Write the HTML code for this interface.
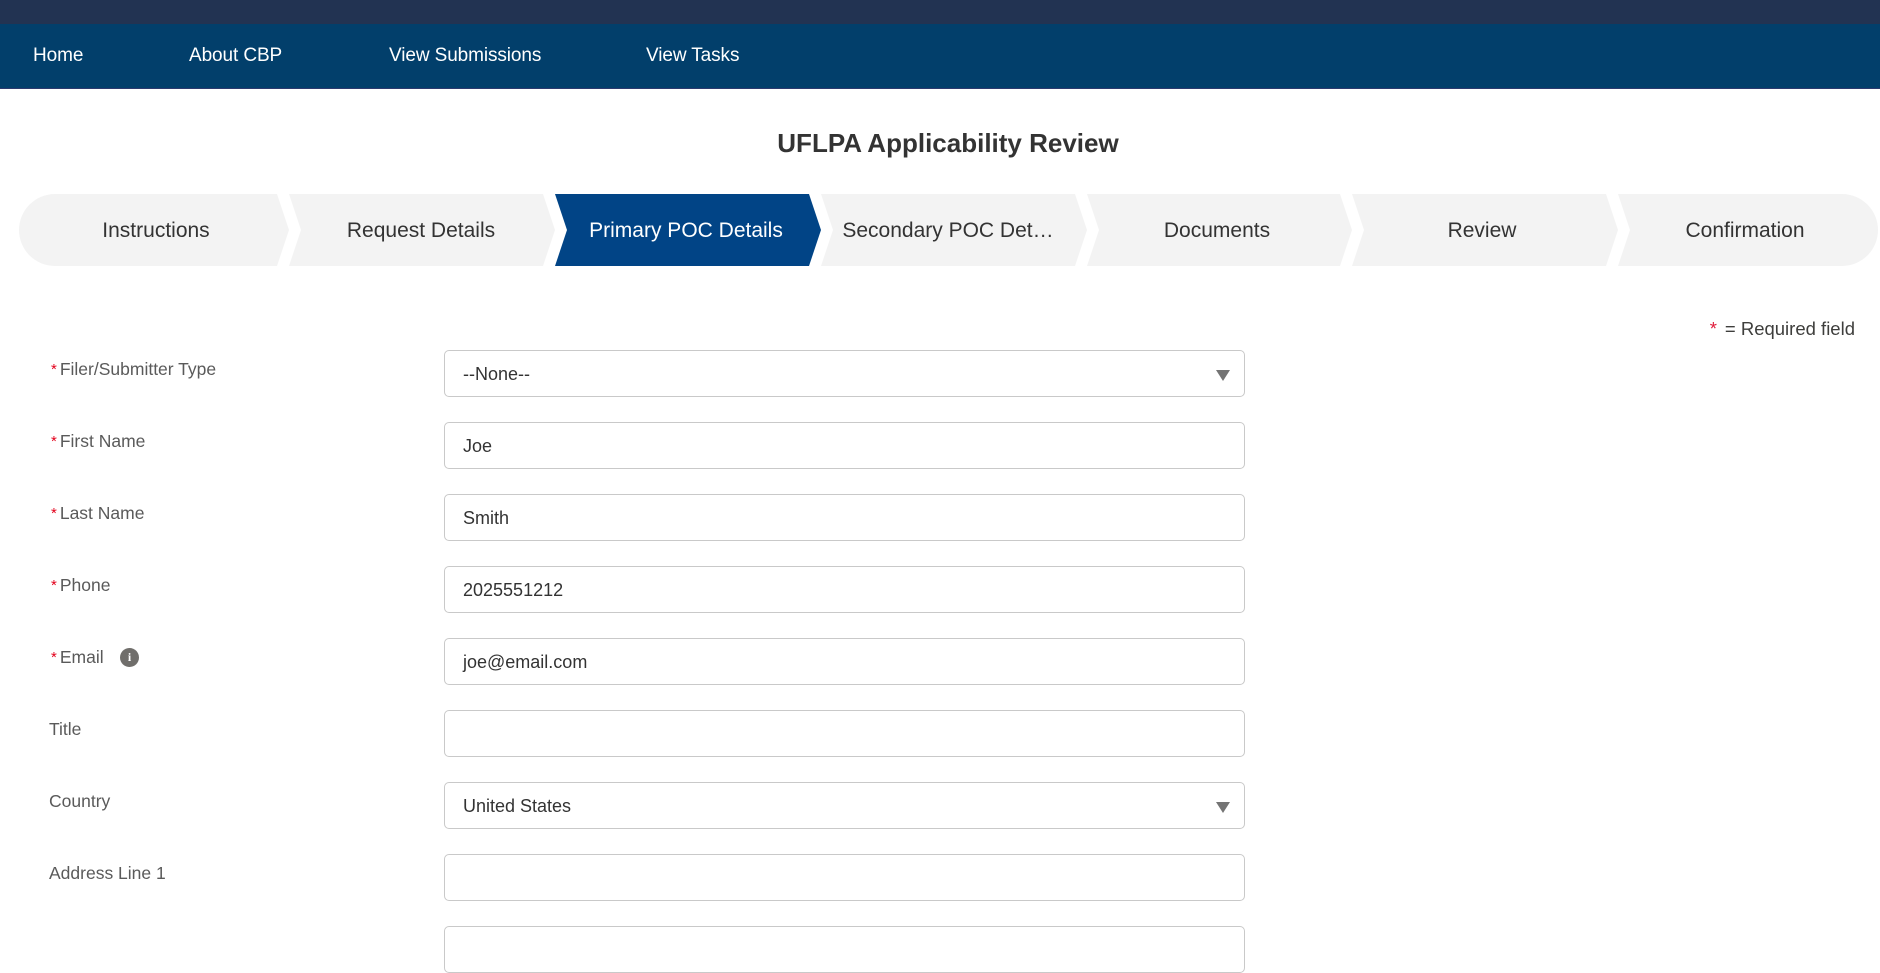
<!DOCTYPE html>
<html><head><meta charset="utf-8">
<style>
*{margin:0;padding:0;box-sizing:border-box}
html,body{width:1880px;height:938px;overflow:hidden;background:#fff;font-family:"Liberation Sans",sans-serif}
.top{position:absolute;left:0;top:0;width:1880px;height:24px;background:#223352}
.nav{position:absolute;left:0;top:24px;width:1880px;height:65px;background:#023f6b;border-bottom:1px solid #2d3a6e}
.nav span{position:absolute;top:21px;color:#fff;font-size:19px;letter-spacing:-0.1px}
.title{position:absolute;left:8px;width:1880px;top:128px;text-align:center;font-size:26px;font-weight:bold;color:#333}
.req{position:absolute;right:25px;top:318px;font-size:18.5px;color:#3e3e3c}
.req b{color:#e01e3c;font-weight:normal;margin-right:8px}
.lbl{position:absolute;left:49px;font-size:17.5px;color:#5a5a5a}
.lbl i{font-style:normal;color:#e3001b;margin-right:5px;font-size:15px;position:relative;left:2px;top:-1px}
.inp{position:absolute;left:444px;width:801px;height:47px;border:1px solid #c9c9c9;border-radius:5px;background:#fff;font-size:18px;color:#333;padding:13px 0 0 18px}
.tri{position:absolute;right:14px;top:19px;width:0;height:0;border-left:7px solid transparent;border-right:7px solid transparent;border-top:11px solid #747474}
.info{position:absolute;left:120px;width:19px;height:19px;border-radius:50%;background:#706e6b;color:#fff;font-size:12px;font-weight:bold;text-align:center;line-height:19px;font-family:"Liberation Serif",serif}
</style></head><body>
<div class="top"></div>
<div class="nav">
<span style="left:33px">Home</span>
<span style="left:189px">About CBP</span>
<span style="left:389px">View Submissions</span>
<span style="left:646px">View Tasks</span>
</div>
<div class="title">UFLPA Applicability Review</div>
<svg style="position:absolute;left:0;top:0" width="1880" height="300">
<g fill="#f3f3f3">
<path d="M55,194 H277 L289,230 L277,266 H55 A36,36 0 0 1 55,194 Z"/>
<path d="M289,194 H543 L555,230 L543,266 H289 L301,230 Z"/>
<path d="M555,194 H809 L821,230 L809,266 H555 L567,230 Z" fill="#014486"/>
<path d="M821,194 H1075 L1087,230 L1075,266 H821 L833,230 Z"/>
<path d="M1087,194 H1340 L1352,230 L1340,266 H1087 L1099,230 Z"/>
<path d="M1352,194 H1606 L1618,230 L1606,266 H1352 L1364,230 Z"/>
<path d="M1618,194 H1842 A36,36 0 0 1 1842,266 H1618 L1630,230 Z"/>
</g>
<g font-family="Liberation Sans, sans-serif" font-size="21" fill="#333" text-anchor="middle">
<text x="156" y="237">Instructions</text>
<text x="421" y="237">Request Details</text>
<text x="686" y="237" fill="#fff">Primary POC Details</text>
<text x="948" y="237">Secondary POC Det…</text>
<text x="1217" y="237">Documents</text>
<text x="1482" y="237">Review</text>
<text x="1745" y="237">Confirmation</text>
</g>
</svg>
<div class="req"><b>*</b>= Required field</div>

<div class="lbl" style="top:359px"><i>*</i>Filer/Submitter Type</div>
<div class="inp" style="top:350px">--None--<div class="tri"></div></div>

<div class="lbl" style="top:431px"><i>*</i>First Name</div>
<div class="inp" style="top:422px">Joe</div>

<div class="lbl" style="top:503px"><i>*</i>Last Name</div>
<div class="inp" style="top:494px">Smith</div>

<div class="lbl" style="top:575px"><i>*</i>Phone</div>
<div class="inp" style="top:566px">2025551212</div>

<div class="lbl" style="top:647px"><i>*</i>Email</div>
<div class="info" style="top:648px">i</div>
<div class="inp" style="top:638px">joe@email.com</div>

<div class="lbl" style="top:719px">Title</div>
<div class="inp" style="top:710px"></div>

<div class="lbl" style="top:791px">Country</div>
<div class="inp" style="top:782px">United States<div class="tri"></div></div>

<div class="lbl" style="top:863px">Address Line 1</div>
<div class="inp" style="top:854px"></div>

<div class="inp" style="top:926px"></div>
</body></html>
